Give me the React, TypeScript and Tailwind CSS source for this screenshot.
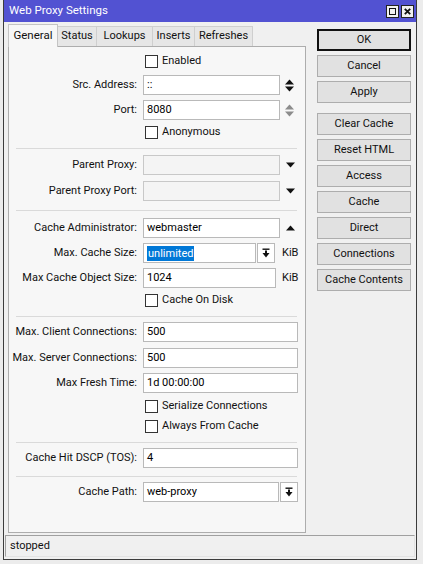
import React from 'react';

const font = { fontFamily: 'Roboto, "Liberation Sans", Arial, sans-serif' };

const SpinIcon: React.FC<{ color?: string }> = ({ color = '#111' }) => (
    <svg width="9" height="15" viewBox="0 0 9 15">
        <polygon points="0,6.5 4.5,1.5 9,6.5" fill={color} />
        <polygon points="0,8.5 9,8.5 4.5,13.5" fill={color} />
    </svg>
);

const DownIcon: React.FC = () => (
    <svg width="9" height="6" viewBox="0 0 9 6">
        <polygon points="0,0.5 9,0.5 4.5,5.5" fill="#111" />
    </svg>
);

const UpIcon: React.FC = () => (
    <svg width="9" height="6" viewBox="0 0 9 6">
        <polygon points="0,5.5 9,5.5 4.5,0.5" fill="#111" />
    </svg>
);

const DropButton: React.FC<{ className?: string }> = ({ className = '' }) => (
    <div className={`h-[20px] w-[18px] border border-[#b9b9b9] bg-white flex items-center justify-center ${className}`}>
        <svg width="8" height="10" viewBox="0 0 8 10">
            <rect x="0.5" y="0.5" width="7" height="1.4" fill="#111" />
            <rect x="3" y="2.5" width="2" height="3" fill="#111" />
            <polygon points="0.5,5 7.5,5 4,9.5" fill="#111" />
        </svg>
    </div>
);

const Field: React.FC<{ width: string; value?: string; disabled?: boolean; selected?: boolean }> = ({ width, value, disabled, selected }) => (
    <div className={`h-[20px] ${width} border ${disabled ? 'border-[#c8c8c8] bg-[#f4f4f4]' : 'border-[#b9b9b9] bg-white'} flex items-center pl-[3px] text-[11px] text-black overflow-hidden whitespace-nowrap`}>
        {selected ? <span className="bg-[#0078d7] text-white leading-[15px] px-[1px]">{value}</span> : value}
    </div>
);

const Row: React.FC<{ label: string; className?: string; children: React.ReactNode }> = ({ label, className = '', children }) => (
    <div className={`flex items-center h-[20px] ${className}`}>
        <div className="w-[130px] text-right pr-[2px] whitespace-nowrap text-[11px] text-[#111]">{label}</div>
        <div className="ml-[4px] flex items-center">{children}</div>
    </div>
);

const Check: React.FC<{ label: string; className?: string }> = ({ label, className = '' }) => (
    <div className={`flex items-center h-[20px] pl-[136px] ${className}`}>
        <div className="w-[13px] h-[13px] border border-[#333] bg-white" />
        <span className="ml-[4px] text-[11px] text-[#111]">{label}</span>
    </div>
);

const Sep: React.FC<{ className?: string }> = ({ className = '' }) => (
    <div className={`h-px bg-[#dadada] ml-[7px] mr-[8px] ${className}`} />
);

const tabs = [
    { name: 'Status', w: 'w-[40px]' },
    { name: 'Lookups', w: 'w-[57px]' },
    { name: 'Inserts', w: 'w-[43px]' },
    { name: 'Refreshes', w: 'w-[59px]' },
];

const buttons = ['Clear Cache', 'Reset HTML', 'Access', 'Cache', 'Direct', 'Connections', 'Cache Contents'];

const Btn: React.FC<{ label: string; primary?: boolean }> = ({ label, primary }) => (
    <div className={`h-[22px] w-[94px] flex items-center justify-center bg-[#e1e1e1] text-[11px] text-[#111] border ${primary ? 'border-[#111] border-[2px]' : 'border-[#adadad]'}`}>
        {label}
    </div>
);

export default function App() {
    return (
        <div className="w-[423px] h-[564px] bg-[#ececec] overflow-hidden" style={font}>
            <div className="ml-[3px] w-[414px] h-[560px] border-l border-r border-b border-[#3c3c3c] bg-[#f0f0f0] flex flex-col">
                {/* title bar */}
                <div className="h-[22px] bg-[#5252d2] flex items-center pl-[5px] pr-[2px]">
                    <span className="text-white text-[11.5px]">Web Proxy Settings</span>
                    <div className="ml-auto flex gap-[2px]">
                        <div className="w-[13px] h-[13px] bg-[#f0f0f0] border border-[#222] flex items-center justify-center">
                            <div className="w-[7px] h-[7px] border border-[#111]" />
                        </div>
                        <div className="w-[13px] h-[13px] bg-[#f0f0f0] border border-[#222] flex items-center justify-center">
                            <svg width="7" height="7" viewBox="0 0 7 7">
                                <path d="M0.8 0.8 L6.2 6.2 M6.2 0.8 L0.8 6.2" stroke="#111" strokeWidth="1.8" />
                            </svg>
                        </div>
                    </div>
                </div>

                <div className="flex pl-[4px] pt-[2px]">
                    {/* left side: tabs */}
                    <div className="w-[298px] flex flex-col">
                        <div className="flex items-end h-[22px]">
                            <div className="relative z-10 -mb-px h-[23px] w-[50px] bg-[#f7f7f7] border-l border-t border-r border-[#c4c4c4] flex items-center justify-center text-[11.5px] text-[#111]">
                                General
                            </div>
                            {tabs.map(t => (
                                <div key={t.name} className={`h-[20px] ${t.w} -ml-px bg-[#e6e6e6] border-l border-t border-r border-[#cfcfcf] flex items-center justify-center text-[11px] text-[#111]`}>
                                    {t.name}
                                </div>
                            ))}
                        </div>
                        <div className="h-[487px] border border-[#adadad] bg-[#f7f7f7] flex flex-col">
                            <Check label="Enabled" className="mt-[4px]" />
                            <Row label="Src. Address:" className="mt-[4px]">
                                <Field width="w-[137px]" value="::" />
                                <div className="ml-[5px]"><SpinIcon /></div>
                            </Row>
                            <Row label="Port:" className="mt-[5px]">
                                <Field width="w-[137px]" value="8080" />
                                <div className="ml-[5px]"><SpinIcon color="#8c8c8c" /></div>
                            </Row>
                            <Check label="Anonymous" className="mt-[2px]" />
                            <Sep className="mt-[6px]" />
                            <Row label="Parent Proxy:" className="mt-[6px]">
                                <Field width="w-[137px]" disabled />
                                <div className="ml-[6px]"><DownIcon /></div>
                            </Row>
                            <Row label="Parent Proxy Port:" className="mt-[6px]">
                                <Field width="w-[137px]" disabled />
                                <div className="ml-[6px]"><DownIcon /></div>
                            </Row>
                            <Sep className="mt-[9px]" />
                            <Row label="Cache Administrator:" className="mt-[7px]">
                                <Field width="w-[137px]" value="webmaster" />
                                <div className="ml-[6px]"><UpIcon /></div>
                            </Row>
                            <Row label="Max. Cache Size:" className="mt-[5px]">
                                <Field width="w-[113px]" value="unlimited" selected />
                                <DropButton className="ml-[1px]" />
                                <span className="ml-[7px] text-[11px] text-[#111]">KiB</span>
                            </Row>
                            <Row label="Max Cache Object Size:" className="mt-[5px]">
                                <Field width="w-[133px]" value="1024" />
                                <span className="ml-[6px] text-[11px] text-[#111]">KiB</span>
                            </Row>
                            <Check label="Cache On Disk" className="mt-[2px]" />
                            <Sep className="mt-[6px]" />
                            <Row label="Max. Client Connections:" className="mt-[5px]">
                                <Field width="w-[155px]" value="500" />
                            </Row>
                            <Row label="Max. Server Connections:" className="mt-[6px]">
                                <Field width="w-[155px]" value="500" />
                            </Row>
                            <Row label="Max Fresh Time:" className="mt-[5px]">
                                <Field width="w-[155px]" value="1d 00:00:00" />
                            </Row>
                            <Check label="Serialize Connections" className="mt-[3px]" />
                            <Check label="Always From Cache" />
                            <Sep className="mt-[6px]" />
                            <Row label="Cache Hit DSCP (TOS):" className="mt-[5px]">
                                <Field width="w-[155px]" value="4" />
                            </Row>
                            <Sep className="mt-[8px]" />
                            <Row label="Cache Path:" className="mt-[5px]">
                                <Field width="w-[136px]" value="web-proxy" />
                                <DropButton className="ml-[1px]" />
                            </Row>
                        </div>
                    </div>

                    {/* right side: buttons */}
                    <div className="ml-[11px] pt-[5px] flex flex-col">
                        <Btn label="OK" primary />
                        <div className="mt-[4px]"><Btn label="Cancel" /></div>
                        <div className="mt-[4px]"><Btn label="Apply" /></div>
                        <div className="mt-[10px] flex flex-col gap-[4px]">
                            {buttons.map(b => <Btn key={b} label={b} />)}
                        </div>
                    </div>
                </div>

                {/* status bar */}
                <div className="mt-[2px] mx-[1px] h-[22px] border border-t-[#a0a0a0] border-l-[#a0a0a0] border-r-[#e3e3e3] border-b-[#e3e3e3] flex items-center pl-[4px] text-[11px] text-[#111]">
                    stopped
                </div>
            </div>
        </div>
    );
}
